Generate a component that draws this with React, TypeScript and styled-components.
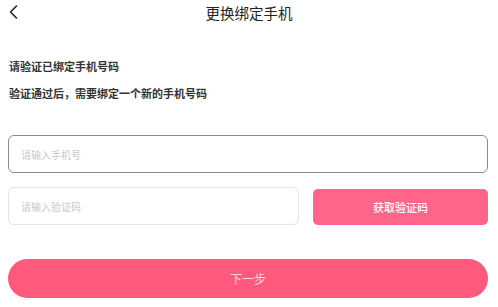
import React from 'react';
import styled, { createGlobalStyle } from 'styled-components';

const GlobalStyle = createGlobalStyle`
  html, body {
    margin: 0;
    padding: 0;
    background: #fff;
    font-family: 'Noto Sans CJK SC', 'Noto Sans', sans-serif;
  }
`;

const App = () => {
  return (
    <>
      <GlobalStyle />
      <Page>
        <Header>
          <BackButton>
            <svg width="9" height="14" viewBox="0 0 9 14" fill="none">
              <path d="M7.5 1L1.5 7L7.5 13" stroke="#222" strokeWidth="1.6" strokeLinecap="round" strokeLinejoin="round" />
            </svg>
          </BackButton>
          <Title>更换绑定手机</Title>
        </Header>
        <Tips>
          <Tip>请验证已绑定手机号码</Tip>
          <Tip>验证通过后，需要绑定一个新的手机号码</Tip>
        </Tips>
        <Form>
          <Field focused>
            <Input placeholder="请输入手机号" />
          </Field>
          <CodeRow>
            <Field grow>
              <Input placeholder="请输入验证码" />
            </Field>
            <CodeButton>获取验证码</CodeButton>
          </CodeRow>
        </Form>
        <NextButton>下一步</NextButton>
      </Page>
    </>
  );
};

export default App;

const Page = styled.div`
  width: 498px;
  height: 307px;
  box-sizing: border-box;
  padding: 0 10px 0 8px;
  display: flex;
  flex-direction: column;
`;

const Header = styled.div`
  height: 25px;
  display: flex;
  align-items: center;
  justify-content: center;
  position: relative;
`;

const BackButton = styled.div`
  position: absolute;
  left: 1px;
  top: 5px;
  display: flex;
`;

const Title = styled.div`
  font-size: 14.5px;
  color: #222;
  margin-left: 2px;
  margin-top: -1px;
`;

const Tips = styled.div`
  margin-top: 33px;
  padding-left: 1px;
  display: flex;
  flex-direction: column;
  gap: 11px;
`;

const Tip = styled.div`
  font-size: 11px;
  line-height: 16px;
  font-weight: 600;
  color: #333;
`;

const Form = styled.div`
  margin-top: 34px;
  display: flex;
  flex-direction: column;
  gap: 14px;
`;

const Field = styled.div<{ focused?: boolean; grow?: boolean }>`
  flex: ${(p) => (p.grow ? '1' : 'none')};
  height: 38px;
  box-sizing: border-box;
  border: 1px solid ${(p) => (p.focused ? '#8a8a8a' : '#e3e3e3')};
  border-radius: 6px;
  display: flex;
  align-items: center;
  padding: 0 12px;
`;

const Input = styled.input`
  border: none;
  outline: none;
  width: 100%;
  padding: 0;
  background: transparent;
  font-family: inherit;
  font-size: 10px;
  color: #333;
  &::placeholder {
    color: #c8c8c8;
  }
`;

const CodeRow = styled.div`
  display: flex;
  gap: 14px;
  align-items: center;
`;

const CodeButton = styled.div`
  width: 175px;
  height: 36px;
  margin-top: 1px;
  border-radius: 5px;
  background: #ff6489;
  color: #fff;
  font-size: 11px;
  font-weight: 500;
  display: flex;
  align-items: center;
  justify-content: center;
`;

const NextButton = styled.div`
  margin-top: 34px;
  height: 39px;
  border-radius: 20px;
  background: #ff5a7e;
  color: #ffd6e0;
  font-size: 12px;
  display: flex;
  align-items: center;
  justify-content: center;
`;
